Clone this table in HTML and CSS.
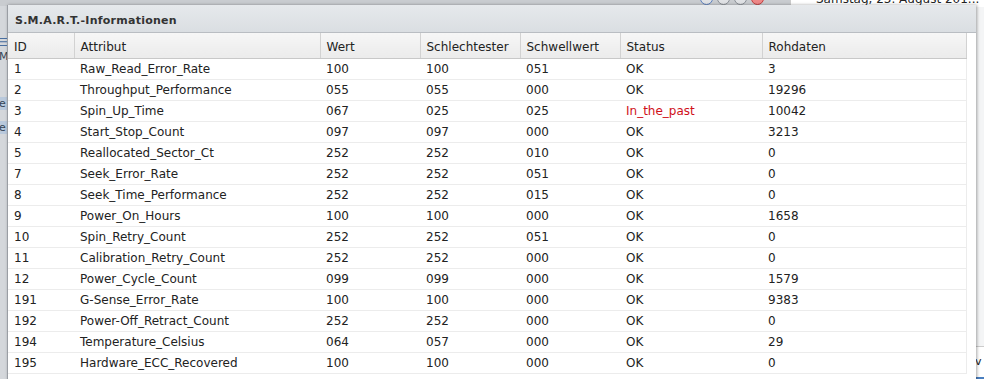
FILE: index.html
```html
<!DOCTYPE html>
<html>
<head>
<meta charset="utf-8">
<link rel="stylesheet" href="styles.css">
</head>
<body>
<div class="desk">
  <div class="topbar">
    <div class="dots"><span class="dot blue"></span><span class="dot"></span><span class="dot"></span><span class="dot red"></span></div>
    <div class="date">Samstag, 23. August 201...</div>
  </div>
  <div class="side">
    <div class="s1">☰</div><div class="s2">M</div><div class="s3">e</div><div class="s4">e</div>
  </div>
  <div class="sideR">v</div>
</div>
<div class="win">
  <div class="title">S.M.A.R.T.-Informationen</div>
  <div class="body">
    <table class="grid">
      <colgroup>
        <col class="c-id"><col class="c-attr"><col class="c-n"><col class="c-n"><col class="c-n"><col class="c-st"><col class="c-raw">
      </colgroup>
      <thead>
        <tr><th>ID</th><th>Attribut</th><th>Wert</th><th>Schlechtester</th><th>Schwellwert</th><th>Status</th><th>Rohdaten</th></tr>
      </thead>
      <tbody>
        <tr><td>1</td><td>Raw_Read_Error_Rate</td><td>100</td><td>100</td><td>051</td><td>OK</td><td>3</td></tr>
        <tr><td>2</td><td>Throughput_Performance</td><td>055</td><td>055</td><td>000</td><td>OK</td><td>19296</td></tr>
        <tr><td>3</td><td>Spin_Up_Time</td><td>067</td><td>025</td><td>025</td><td class="bad">In_the_past</td><td>10042</td></tr>
        <tr><td>4</td><td>Start_Stop_Count</td><td>097</td><td>097</td><td>000</td><td>OK</td><td>3213</td></tr>
        <tr><td>5</td><td>Reallocated_Sector_Ct</td><td>252</td><td>252</td><td>010</td><td>OK</td><td>0</td></tr>
        <tr><td>7</td><td>Seek_Error_Rate</td><td>252</td><td>252</td><td>051</td><td>OK</td><td>0</td></tr>
        <tr><td>8</td><td>Seek_Time_Performance</td><td>252</td><td>252</td><td>015</td><td>OK</td><td>0</td></tr>
        <tr><td>9</td><td>Power_On_Hours</td><td>100</td><td>100</td><td>000</td><td>OK</td><td>1658</td></tr>
        <tr><td>10</td><td>Spin_Retry_Count</td><td>252</td><td>252</td><td>051</td><td>OK</td><td>0</td></tr>
        <tr><td>11</td><td>Calibration_Retry_Count</td><td>252</td><td>252</td><td>000</td><td>OK</td><td>0</td></tr>
        <tr><td>12</td><td>Power_Cycle_Count</td><td>099</td><td>099</td><td>000</td><td>OK</td><td>1579</td></tr>
        <tr><td>191</td><td>G-Sense_Error_Rate</td><td>100</td><td>100</td><td>000</td><td>OK</td><td>9383</td></tr>
        <tr><td>192</td><td>Power-Off_Retract_Count</td><td>252</td><td>252</td><td>000</td><td>OK</td><td>0</td></tr>
        <tr><td>194</td><td>Temperature_Celsius</td><td>064</td><td>057</td><td>000</td><td>OK</td><td>29</td></tr>
        <tr><td>195</td><td>Hardware_ECC_Recovered</td><td>100</td><td>100</td><td>000</td><td>OK</td><td>0</td></tr>
      </tbody>
    </table>
  </div>
</div>
</body>
</html>
```
FILE: styles.css
```css
html, body {
  margin: 0;
  padding: 0;
  width: 984px;
  height: 379px;
  overflow: hidden;
  background: #f4f5f6;
  font-family: "DejaVu Sans", Verdana, sans-serif;
  font-size: 12px;
  color: #222;
}
.desk {
  position: relative;
  width: 984px;
  height: 379px;
}
.topbar {
  height: 6px;
  background: #c9ccd0;
  position: relative;
}
.dots {
  position: absolute;
  left: 700px;
  top: -8px;
  display: flex;
  gap: 4px;
}
.dot {
  width: 11px;
  height: 11px;
  border-radius: 50%;
  border: 1px solid #8a8f96;
  background: #e0e2e5;
}
.dot.blue { border-color: #5a7fbf; }
.dot.red { border-color: #c04040; background: #e88; }
.date {
  position: absolute;
  left: 790px;
  top: -7px;
  width: 194px;
  height: 14px;
  background: #fff;
  padding-left: 25px;
  box-sizing: border-box;
  font-size: 12px;
  line-height: 13px;
  color: #222;
  border-left: 1px solid #ccc;
  white-space: nowrap;
  overflow: hidden;
}
.side {
  position: absolute;
  left: 0;
  top: 6px;
  width: 8px;
  height: 373px;
  background: #d4d7db;
  font-size: 11px;
  color: #345;
  overflow: hidden;
}
.s1 { position: absolute; top: 30px; left: -2px; color: #4a6fa0; }
.s2 { position: absolute; top: 44px; left: -1px; }
.s3 { position: absolute; top: 91px; left: -1px; }
.s4 { position: absolute; top: 115px; left: -1px; }
.s3, .s4 { background: #b9c9dc; width: 8px; }
.sideR {
  position: absolute;
  right: 0;
  top: 346px;
  width: 9px;
  height: 30px;
  background: #fff;
  border-top: 1px solid #ccc;
  font-size: 11px;
  line-height: 30px;
  overflow: hidden;
  color: #222;
  border-bottom: 3px solid #4a7fc0;
}
.win {
  position: absolute;
  left: 7px;
  top: 5px;
  width: 968px;
  height: 380px;
  background: #fff;
  border-left: 1px solid #9a9ea4;
  box-shadow: 1px 0 3px rgba(0,0,0,0.35);
}
.title {
  height: 25px;
  padding-top: 2px;
  background: linear-gradient(#e6e9ec, #dadee2);
  border-bottom: 1px solid #b9bdc2;
  font-weight: bold;
  font-size: 11px;
  line-height: 27px;
  padding-left: 7px;
  color: #333;
  letter-spacing: 0.25px;
  overflow: hidden;
}
.body {
  padding-right: 9px;
  background: #fff;
}
.grid {
  border-collapse: collapse;
  table-layout: fixed;
  width: 958px;
}
.c-id { width: 66px; }
.c-attr { width: 246px; }
.c-n { width: 100px; }
.c-st { width: 142px; }
.c-raw { width: 204px; }
.grid th {
  height: 20px;
  padding: 4px 6px 0;
  line-height: 21px;
  text-align: left;
  font-weight: normal;
  background: linear-gradient(#f6f6f6, #ebebeb);
  border-right: 1px solid #d2d2d2;
  border-bottom: 1px solid #c8c8c8;
  color: #222;
  white-space: nowrap;
  vertical-align: middle;
}
.grid td {
  height: 20px;
  line-height: 20px;
  padding: 0 6px;
  border-bottom: 1px solid #ececec;
  white-space: nowrap;
  color: #222;
}
.grid td:last-child { border-right: 1px solid #ececec; }
.grid td.bad { color: #d0101a; }
```
